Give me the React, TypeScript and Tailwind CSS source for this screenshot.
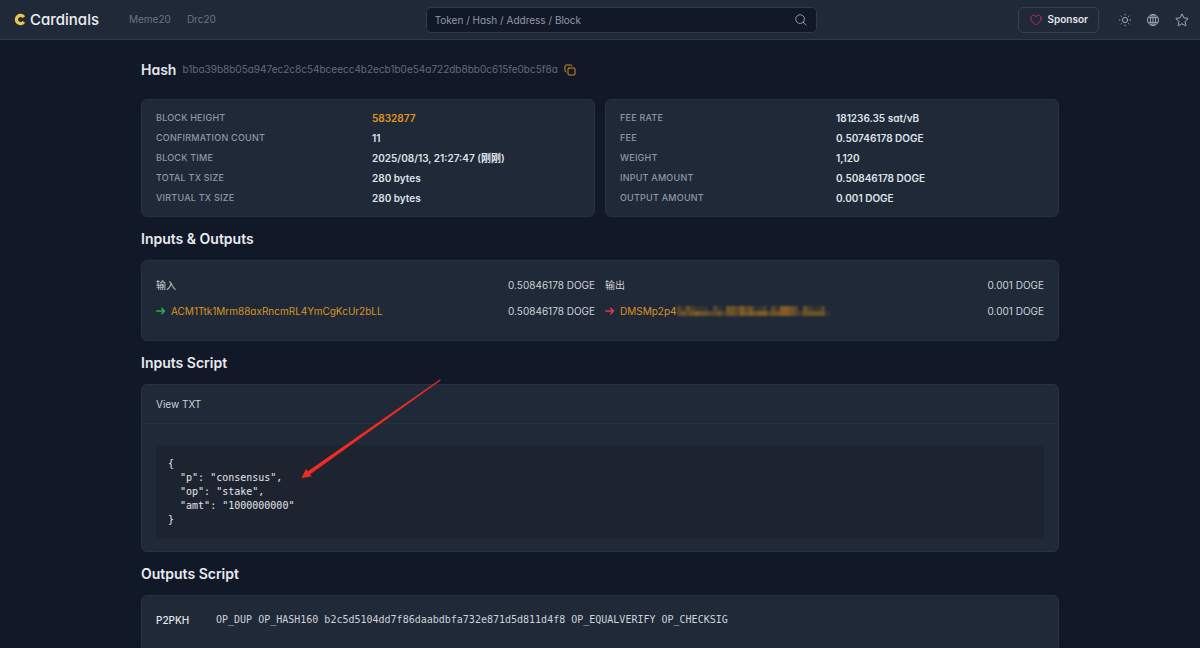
import type { ReactNode } from 'react'
import { Copy } from 'lucide-react'
import { HiOutlineHeart, HiOutlineMagnifyingGlass, HiOutlineStar } from 'react-icons/hi2'

type Row = { label: string; value: string; link?: boolean }

const BLOCK_ROWS: Row[] = [
  { label: 'Block Height', value: '5832877', link: true },
  { label: 'Confirmation Count', value: '11' },
  { label: 'Block Time', value: '2025/08/13, 21:27:47 (刚刚)' },
  { label: 'Total TX Size', value: '280 bytes' },
  { label: 'Virtual TX Size', value: '280 bytes' },
]

const FEE_ROWS: Row[] = [
  { label: 'Fee Rate', value: '181236.35 sat/vB' },
  { label: 'Fee', value: '0.50746178 DOGE' },
  { label: 'Weight', value: '1,120' },
  { label: 'Input Amount', value: '0.50846178 DOGE' },
  { label: 'Output Amount', value: '0.001 DOGE' },
]

const SCRIPT_TEXT = `{
  "p": "consensus",
  "op": "stake",
  "amt": "1000000000"
}`

// Brightness of each tile covering the hidden part of the output address.
const MASK_TOP = [3, 1, 4, 2, 1, 1, 1, 0, 3, 1, 0, 4, 4, 3, 5, 3, 4, 1, 1, 2, 0, 3, 1, 5, 5, 4, 3, 0, 4, 2, 1, 1, 3, 0]
const MASK_BOTTOM = [3, 4, 3, 4, 5, 4, 4, 3, 3, 4, 2, 4, 4, 3, 5, 4, 5, 4, 5, 5, 3, 4, 4, 5, 5, 4, 3, 2, 4, 4, 4, 4, 4, 1]

function Card({ children, className = '' }: { children: ReactNode; className?: string }) {
  return <div className={`rounded-md border border-[#27313f] bg-[#202937] ${className}`}>{children}</div>
}

function Stats({ rows }: { rows: Row[] }) {
  return (
    <Card className="px-3.5 py-2">
      <dl>
        {rows.map((row) => (
          <div key={row.label} className="grid h-5 grid-cols-2 leading-5">
            <dt className="text-[9px] font-medium tracking-wide text-[#8f97a5] uppercase">{row.label}</dt>
            <dd className="pl-1 text-[10px] font-semibold text-[#dfe3e9]">
              {row.link ? <a href="#block" className="text-[#e0981f]">{row.value}</a> : row.value}
            </dd>
          </div>
        ))}
      </dl>
    </Card>
  )
}

function SectionTitle({ children }: { children: ReactNode }) {
  return <h2 className="my-2.5 text-[14px] leading-[23px] font-semibold text-[#e8ebf0]">{children}</h2>
}

function SunIcon() {
  return (
    <svg viewBox="0 0 24 24" className="size-3.5" fill="none" stroke="currentColor" strokeWidth="1.7" strokeLinecap="round" aria-hidden>
      <circle cx="12" cy="12" r="4.5" />
      <path d="M12 2.3v1M12 20.7v1M2.3 12h1M20.7 12h1M5.1 5.1l.7.7M18.2 18.2l.7.7M5.1 18.9l.7-.7M18.2 5.8l.7-.7" />
    </svg>
  )
}

function GlobeIcon() {
  return (
    <svg viewBox="0 0 24 24" className="size-3.5" fill="none" stroke="currentColor" strokeWidth="1.6" aria-hidden>
      <circle cx="12" cy="12" r="9.5" />
      <ellipse cx="12" cy="12" rx="4.5" ry="9.5" />
      <path d="M12 2.5v19M3.6 8h16.8M3.6 16h16.8" />
    </svg>
  )
}

function FlowArrow({ className }: { className: string }) {
  return (
    <svg viewBox="0 0 20 20" className={`size-2.5 ${className}`} fill="none" stroke="currentColor" strokeWidth="3" strokeLinecap="round" strokeLinejoin="round" aria-hidden>
      <path d="M1.5 10H17M11.5 4.5L17 10L11.5 15.5" />
    </svg>
  )
}

function Header() {
  return (
    <header className="flex h-10 items-center justify-between border-b border-[#303a49] bg-[#202937]">
      <div className="flex items-center pr-2 pl-3.5">
        <a href="#home" className="flex items-center gap-[3px] text-[15px] leading-5 font-medium text-[#eceff3]">
          <svg viewBox="0 0 24 24" className="size-[13px]" aria-hidden>
            <circle cx="12" cy="12" r="12" fill="#33291a" />
            <path d="M18.2 7.6A7.6 7.6 0 1 0 18.2 16.4" fill="none" stroke="#dfc563" strokeWidth="6" />
          </svg>
          Cardinals
        </a>
        <nav className="ml-[30px] flex gap-4 text-[10px] text-[#6b7482]">
          <a href="#meme20">Meme20</a>
          <a href="#drc20">Drc20</a>
        </nav>
      </div>

      <form role="search" className="flex h-[26px] w-[391px] items-center rounded-[5px] border border-[#303a49] bg-[#111827] px-2">
        <input
          type="search"
          aria-label="Search"
          placeholder="Token / Hash / Address / Block"
          className="min-w-0 flex-1 bg-transparent text-[10px] leading-4 text-[#d1d5db] outline-none placeholder:text-[#9299a5]"
        />
        <button type="button" aria-label="Search" className="text-[#a0a7b2]">
          <HiOutlineMagnifyingGlass className="size-3.5" />
        </button>
      </form>

      <div className="flex items-center pr-2.5 text-[#a4abb6]">
        <button type="button" className="mr-[19px] flex h-[26px] items-center gap-1 rounded-[5px] border border-[#36404f] px-2.5 text-[10px] font-semibold text-[#e1e5ea]">
          <HiOutlineHeart className="size-3.5 text-[#d22c68]" />
          Sponsor
        </button>
        <div className="flex gap-3.5">
          <button type="button" aria-label="Theme"><SunIcon /></button>
          <button type="button" aria-label="Language"><GlobeIcon /></button>
          <button type="button" aria-label="Favorites"><HiOutlineStar className="size-4" /></button>
        </div>
      </div>
    </header>
  )
}

function Mask() {
  return (
    <span aria-hidden className="grid w-[153px] grid-rows-2 blur-[1px]">
      {[MASK_TOP, MASK_BOTTOM].map((levels, r) => (
        <span key={r} className="flex h-[5px]">
          {levels.map((level, i) => (
            <span key={i} className="flex-1 bg-[#b47a1c]" style={{ opacity: level * 0.13 }} />
          ))}
        </span>
      ))}
    </span>
  )
}

function Transfer({ title, amount, children }: { title: string; amount: string; children: ReactNode }) {
  return (
    <div className="text-[10px] leading-4 text-[#cdd2da]">
      <div className="flex justify-between">
        <span>{title}</span>
        <span>{amount}</span>
      </div>
      <div className="mt-2.5 flex justify-between">
        <div className="flex items-center gap-[5px]">{children}</div>
        <span>{amount}</span>
      </div>
    </div>
  )
}

export default function App() {
  return (
    <div className="min-h-screen bg-[#111827] font-['Inter','Noto_Sans_CJK_SC',sans-serif] text-[#e5e7eb] [font-feature-settings:'cv11']">
      <Header />
      <main className="mx-auto max-w-[918px]">
        <div className="flex items-center py-[18px]">
          <h1 className="text-[14px] leading-[23px] font-semibold">Hash</h1>
          <span className="ml-1.5 text-[10px] text-[#636b79]">b1ba39b8b05a947ec2c8c54bceecc4b2ecb1b0e54a722db8bb0c615fe0bc5f8a</span>
          <button type="button" aria-label="Copy hash" className="ml-1.5 text-[#d28d1f]">
            <Copy className="size-3" />
          </button>
        </div>

        <div className="grid grid-cols-2 gap-2.5">
          <Stats rows={BLOCK_ROWS} />
          <Stats rows={FEE_ROWS} />
        </div>

        <SectionTitle>Inputs &amp; Outputs</SectionTitle>
        <Card className="grid grid-cols-2 gap-2.5 px-3.5 pt-4 pb-[21px]">
          <Transfer title="输入" amount="0.50846178 DOGE">
            <FlowArrow className="text-[#22b34f]" />
            <a href="#input" className="text-[#d9941f]">ACM1Ttk1Mrm88axRncmRL4YmCgKcUr2bLL</a>
          </Transfer>
          <Transfer title="输出" amount="0.001 DOGE">
            <FlowArrow className="text-[#e0364f]" />
            <a href="#output" className="flex items-center text-[#d9941f]">
              DMSMp2p4
              <Mask />
            </a>
          </Transfer>
        </Card>

        <SectionTitle>Inputs Script</SectionTitle>
        <Card className="relative">
          <div className="border-b border-[#27313f] px-3.5 py-[11px] text-[10px] leading-4 text-[#cdd2da]">View TXT</div>
          <div className="px-3.5 pt-[21px] pb-3">
            <pre className="rounded-[5px] bg-[#1d2430] px-3 py-3 font-['DejaVu_Sans_Mono',monospace] text-[10px] leading-[14px] text-[#e2e5ea]">{SCRIPT_TEXT}</pre>
          </div>
          {/* Callout arrow laid over the script */}
          <svg viewBox="0 0 140 100" className="pointer-events-none absolute -top-1.5 left-[159px] h-[100px] w-[140px]" fill="#ef2b24" aria-hidden>
            <path d="M139.2 0.2L139.8 1.2L9.2 95.2L10.5 97.6L0.5 99L5 90L6.8 92.2Z" />
          </svg>
        </Card>

        <SectionTitle>Outputs Script</SectionTitle>
        <Card className="flex px-3.5 pt-4 pb-6 text-[10px] leading-4">
          <span className="w-[60px] font-medium">P2PKH</span>
          <code className="font-['DejaVu_Sans_Mono',monospace] text-[#cdd2da]">
            OP_DUP OP_HASH160 b2c5d5104dd7f86daabdbfa732e871d5d811d4f8 OP_EQUALVERIFY OP_CHECKSIG
          </code>
        </Card>
      </main>
    </div>
  )
}
